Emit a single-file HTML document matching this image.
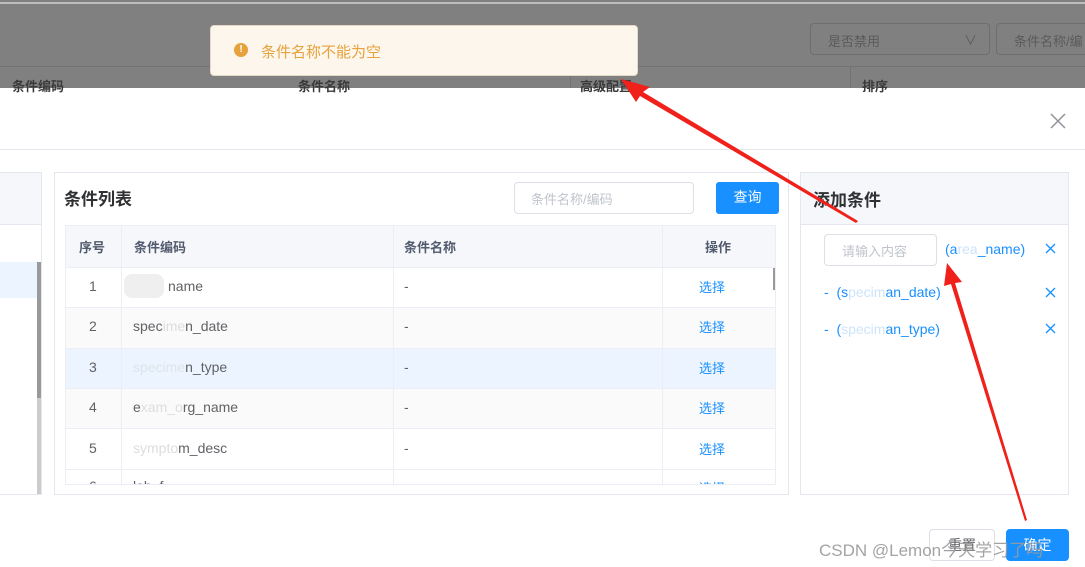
<!DOCTYPE html><html><head><meta charset="utf-8"><style>
*{margin:0;padding:0;box-sizing:border-box}
body{width:1085px;height:567px;overflow:hidden;position:relative;background:#fff;font-family:"Liberation Sans","Noto Sans CJK SC",sans-serif;font-size:14px;color:#606266}
.a{position:absolute}
</style></head><body>
<div class="a" style="left:0;top:0;width:1085px;height:88px;background:#808080"></div>
<div class="a" style="left:0;top:2px;width:1085px;height:2px;background:#bdbdbd"></div>
<div class="a" style="left:0;top:66px;width:1085px;height:1px;background:#737373"></div>
<div class="a" style="left:810px;top:23px;width:180px;height:32px;border:1px solid #6e6e6e;border-radius:4px;color:#5a5a5a;padding:7px 17px;font-size:13px">是否禁用<span style="position:absolute;right:12px;top:6px">∨</span></div>
<div class="a" style="left:996px;top:23px;width:100px;height:32px;border:1px solid #6e6e6e;border-radius:4px;color:#5a5a5a;padding:7px 17px;font-size:13px;white-space:nowrap">条件名称/编</div>
<div class="a" style="left:12px;top:76px;font-size:13px;font-weight:bold;color:#3a3a3a">条件编码</div>
<div class="a" style="left:298px;top:76px;font-size:13px;font-weight:bold;color:#3a3a3a">条件名称</div>
<div class="a" style="left:580px;top:76px;font-size:13px;font-weight:bold;color:#3a3a3a">高级配置</div>
<div class="a" style="left:862px;top:76px;font-size:13px;font-weight:bold;color:#3a3a3a">排序</div>
<div class="a" style="left:570px;top:66px;width:1px;height:22px;background:#737373"></div>
<div class="a" style="left:850px;top:66px;width:1px;height:22px;background:#737373"></div>
<div class="a" style="left:210px;top:25px;width:428px;height:51px;background:#fdf6ec;border:1px solid #e4d9c6;border-radius:4px"></div>
<div class="a" style="left:234px;top:43px;width:14px;height:14px;border-radius:50%;background:#e6a23c;color:#fff;font-size:10px;font-weight:bold;text-align:center;line-height:14px">!</div>
<div class="a" style="left:261px;top:41px;color:#e6a23c;font-size:15px">条件名称不能为空</div>
<div class="a" style="left:0;top:149px;width:1085px;height:1px;background:#e4e7ed"></div>
<svg class="a" style="left:1050px;top:113px" width="16" height="16"><path d="M1 1L15 15M15 1L1 15" stroke="#909399" stroke-width="1.5"/></svg>
<div class="a" style="left:-2px;top:172px;width:44px;height:323px;border:1px solid #e4e7ed"></div>
<div class="a" style="left:0;top:173px;width:41px;height:52px;background:#f5f7fa;border-bottom:1px solid #e4e7ed"></div>
<div class="a" style="left:0;top:262px;width:37px;height:36px;background:#ecf5ff"></div>
<div class="a" style="left:37px;top:262px;width:4px;height:232px;background:#ccc"></div>
<div class="a" style="left:37px;top:262px;width:4px;height:136px;background:#999"></div>
<div class="a" style="left:54px;top:172px;width:735px;height:323px;border:1px solid #e4e7ed"></div>
<div class="a" style="left:64px;top:185px;font-size:17px;font-weight:bold;color:#303133">条件列表</div>
<div class="a" style="left:514px;top:182px;width:180px;height:32px;border:1px solid #dcdfe6;border-radius:4px;color:#c0c4cc;font-size:13px;padding:6px 16px">条件名称/编码</div>
<div class="a" style="left:716px;top:182px;width:63px;height:32px;background:#1890ff;border-radius:3px;color:#fff;font-size:14px;text-align:center;line-height:30px">查询</div>
<div class="a" style="left:65px;top:225px;width:711px;height:260px;border:1px solid #ebeef5;overflow:hidden">
 <div class="a" style="left:0;top:0;width:711px;height:42px;background:#f5f7fa;border-bottom:1px solid #ebeef5"></div>
 <div class="a" style="left:0;top:122px;width:711px;height:40px;background:#ecf5ff"></div>
 <div class="a" style="left:0;top:82px;width:711px;height:40px;background:#fafafa"></div>
 <div class="a" style="left:0;top:162px;width:711px;height:40px;background:#fafafa"></div>
 <div class="a" style="left:0;top:81px;width:711px;height:1px;background:#ebeef5"></div>
 <div class="a" style="left:0;top:122px;width:711px;height:1px;background:#ebeef5"></div>
 <div class="a" style="left:0;top:162px;width:711px;height:1px;background:#ebeef5"></div>
 <div class="a" style="left:0;top:202px;width:711px;height:1px;background:#ebeef5"></div>
 <div class="a" style="left:0;top:243px;width:711px;height:1px;background:#ebeef5"></div>
 <div class="a" style="left:55px;top:0;width:1px;height:260px;background:#ebeef5"></div>
 <div class="a" style="left:327px;top:0;width:1px;height:260px;background:#ebeef5"></div>
 <div class="a" style="left:596px;top:0;width:1px;height:260px;background:#ebeef5"></div>
 <div class="a" style="left:707px;top:42px;width:4px;height:22px;background:#999"></div>
 <div class="a" style="left:13px;top:11px;font-weight:bold;font-size:13px;color:#515a6e">序号</div>
 <div class="a" style="left:68px;top:11px;font-weight:bold;font-size:13px;color:#515a6e">条件编码</div>
 <div class="a" style="left:338px;top:11px;font-weight:bold;font-size:13px;color:#515a6e">条件名称</div>
 <div class="a" style="left:639px;top:11px;font-weight:bold;font-size:13px;color:#515a6e">操作</div>
 <div class="a" style="left:58px;top:48px;width:40px;height:24px;background:#e8e8e8;border-radius:8px;opacity:.7"></div>
 <div class="a" style="left:23px;top:52px">1</div><div class="a" style="left:102px;top:52px">name</div>
 <div class="a" style="left:23px;top:92px">2</div><div class="a" style="left:67px;top:92px">spec<span style="color:#ddd">ime</span>n_date</div>
 <div class="a" style="left:23px;top:133px">3</div><div class="a" style="left:67px;top:133px"><span style="color:#dde3ea">specime</span>n_type</div>
 <div class="a" style="left:23px;top:173px">4</div><div class="a" style="left:67px;top:173px">e<span style="color:#ddd">xam_o</span>rg_name</div>
 <div class="a" style="left:23px;top:214px">5</div><div class="a" style="left:67px;top:214px"><span style="color:#ddd">sympto</span>m_desc</div>
 <div class="a" style="left:23px;top:252px">6</div><div class="a" style="left:67px;top:252px">lab_f</div>
 <div class="a" style="left:338px;top:52px">-</div><div class="a" style="left:338px;top:92px">-</div><div class="a" style="left:338px;top:133px">-</div><div class="a" style="left:338px;top:173px">-</div><div class="a" style="left:338px;top:214px">-</div>
 <div class="a" style="left:633px;top:51px;color:#1890ff;font-size:13px">选择</div>
 <div class="a" style="left:633px;top:91px;color:#1890ff;font-size:13px">选择</div>
 <div class="a" style="left:633px;top:132px;color:#1890ff;font-size:13px">选择</div>
 <div class="a" style="left:633px;top:172px;color:#1890ff;font-size:13px">选择</div>
 <div class="a" style="left:633px;top:213px;color:#1890ff;font-size:13px">选择</div>
 <div class="a" style="left:633px;top:252px;color:#1890ff;font-size:13px">选择</div>
</div>
<div class="a" style="left:800px;top:172px;width:269px;height:323px;border:1px solid #e4e7ed"></div>
<div class="a" style="left:801px;top:173px;width:267px;height:52px;background:#f5f7fa;border-bottom:1px solid #e4e7ed"></div>
<div class="a" style="left:813px;top:186px;font-size:17px;font-weight:bold;color:#303133">添加条件</div>
<div class="a" style="left:824px;top:234px;width:113px;height:32px;border:1px solid #dcdfe6;border-radius:4px;color:#c0c4cc;font-size:13px;padding:6px 17px">请输入内容</div>
<div class="a" style="left:945px;top:241px;color:#1890ff">(a<span style="color:#cde4fb">rea</span>_name)</div>
<div class="a" style="left:824px;top:284px;color:#1890ff">-&nbsp; (s<span style="color:#cde4fb">pecim</span>an_date)</div>
<div class="a" style="left:824px;top:321px;color:#1890ff">-&nbsp; (<span style="color:#cde4fb">specim</span>an_type)</div>
<svg class="a" style="left:1045px;top:243px" width="11" height="11"><path d="M1 1L10 10M10 1L1 10" stroke="#1890ff" stroke-width="1.3"/></svg>
<svg class="a" style="left:1045px;top:287px" width="11" height="11"><path d="M1 1L10 10M10 1L1 10" stroke="#1890ff" stroke-width="1.3"/></svg>
<svg class="a" style="left:1045px;top:323px" width="11" height="11"><path d="M1 1L10 10M10 1L1 10" stroke="#1890ff" stroke-width="1.3"/></svg>
<div class="a" style="left:929px;top:529px;width:66px;height:32px;border:1px solid #dcdfe6;border-radius:4px;text-align:center;line-height:30px;color:#606266">重置</div>
<div class="a" style="left:1006px;top:529px;width:63px;height:32px;background:#1890ff;border-radius:4px;text-align:center;line-height:32px;color:#fff">确定</div>
<div class="a" style="left:819px;top:536px;font-size:17px;color:#9a9a9a;opacity:.9">CSDN @Lemon今天学习了吗</div>
<svg class="a" style="left:0;top:0" width="1085" height="567">
<polygon points="621,79 650,87 643,92 858,221 856,223 640,96 636,102" fill="#f0201a"/>
<polygon points="947,263 962,282 955,283 1027,520 1025,521 951,284 944,286" fill="#f0201a"/>
</svg>
</body></html>
